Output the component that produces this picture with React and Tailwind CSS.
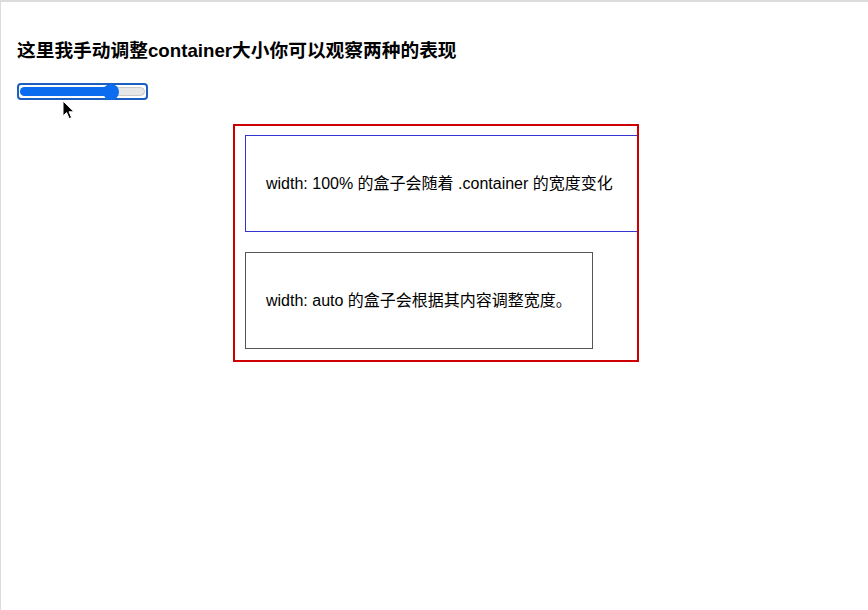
const Cursor = () => (
  <svg width="13" height="20" viewBox="0 0 13 20" className="absolute left-[45px] top-[17px]">
    <path
      d="M1 1 L1 16 L4.6 12.6 L7.2 18.6 L9.6 17.6 L7 11.8 L12 11.8 Z"
      fill="#000"
      stroke="#fff"
      strokeWidth="1"
      strokeLinejoin="round"
    />
  </svg>
);

// range input drawn by hand, focused state
const Slider = () => (
  <div className="relative w-[131px]">
    <div className="h-[17px] rounded-[4px] border-2 border-[#1b5fc1] flex items-center px-[1px]">
      <div className="flex-1 flex items-center h-[9px] rounded-full bg-[#e6e6e6] border border-[#c9c9c9]">
        <div className="w-[91px] h-[9px] -ml-[1px] rounded-l-full bg-[#0b6cf0]" />
        <div className="w-[16px] h-[16px] -ml-[8px] rounded-full bg-[#0b6cf0]" />
      </div>
    </div>
    <Cursor />
  </div>
);

export default function App() {
  return (
    <div className="w-[868px] h-[610px] overflow-hidden bg-white border-t-2 border-l border-[#dcdcdc] text-black font-['Liberation_Sans','Noto_Sans_CJK_SC',sans-serif]">
      <div className="pl-4 pt-[38px]">
        <h2 className="text-[18.72px] font-bold leading-[22px]">
          这里我手动调整container大小你可以观察两种的表现
        </h2>
        <div className="mt-[21px]">
          <Slider />
        </div>
      </div>
      <div className="ml-[232px] mt-[24px] w-[406px] border-2 border-[#cc0000] pt-[9px] pb-[11px] px-[9px] overflow-hidden">
        <div className="w-[calc(100%+2px)] ml-[1px] box-content border border-[#3434d0] px-5 py-[39px] text-[16px] leading-[17px] whitespace-nowrap">
          width: 100% 的盒子会随着 .container 的宽度变化
        </div>
        <div className="mt-[20px] ml-[1px] inline-block border border-[#555] px-5 py-[39px] text-[16px] leading-[17px] whitespace-nowrap">
          width: auto 的盒子会根据其内容调整宽度。
        </div>
      </div>
    </div>
  );
}
